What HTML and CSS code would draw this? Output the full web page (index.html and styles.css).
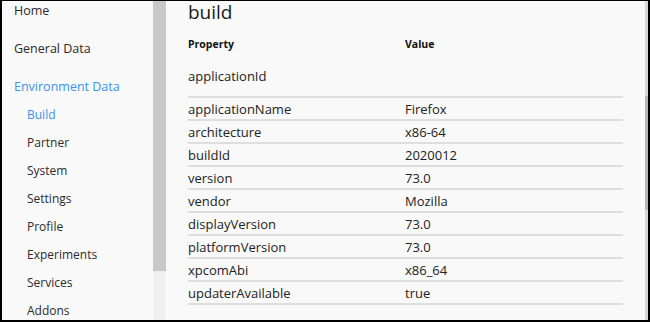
FILE: index.html
```html
<!DOCTYPE html>
<html lang="en">
<head>
  <meta charset="UTF-8" />
  <title>about:telemetry - build</title>
  <link rel="stylesheet" href="styles.css">
</head>
<body>
  <div class="frame">
    <nav class="sidebar">
      <ul class="nav">
        <li class="nav-item">Home</li>
        <li class="nav-item">General Data</li>
        <li class="nav-item active">Environment Data</li>
        <li class="nav-sub active">Build</li>
        <li class="nav-sub">Partner</li>
        <li class="nav-sub">System</li>
        <li class="nav-sub">Settings</li>
        <li class="nav-sub">Profile</li>
        <li class="nav-sub">Experiments</li>
        <li class="nav-sub">Services</li>
        <li class="nav-sub">Addons</li>
      </ul>
    </nav>

    <div class="side-scroll">
      <div class="side-thumb"></div>
      <div class="side-track"></div>
    </div>

    <main class="content">
      <h2>build</h2>

      <div class="table">
        <div class="row head">
          <div>Property</div>
          <div>Value</div>
        </div>
        <div class="row first">
          <div>applicationId</div>
          <div></div>
        </div>
        <div class="row line"><div>applicationName</div><div>Firefox</div></div>
        <div class="row line"><div>architecture</div><div>x86-64</div></div>
        <div class="row line"><div>buildId</div><div>2020012</div></div>
        <div class="row line"><div>version</div><div>73.0</div></div>
        <div class="row line"><div>vendor</div><div>Mozilla</div></div>
        <div class="row line"><div>displayVersion</div><div>73.0</div></div>
        <div class="row line"><div>platformVersion</div><div>73.0</div></div>
        <div class="row line"><div>xpcomAbi</div><div>x86_64</div></div>
        <div class="row line last"><div>updaterAvailable</div><div>true</div></div>
      </div>
    </main>

    <div class="page-scroll">
      <div class="page-track top"></div>
      <div class="page-thumb"></div>
      <div class="page-track"></div>
    </div>
  </div>
</body>
</html>
```

FILE: styles.css
```css
* {
  box-sizing: border-box;
}

html, body {
  margin: 0;
  padding: 0;
  height: 100%;
  overflow: hidden;
}

body {
  font-family: 'Open Sans', 'Noto Sans', sans-serif;
  font-size: 13px;
  color: #222;
  background: #f9f9f9;
}

.frame {
  display: flex;
  height: 322px;
  border: 2px solid #000;
  border-top-width: 1px;
  overflow: hidden;
}

/* left navigation */
.sidebar {
  width: 151px;
  overflow: hidden;
  font-size: 12px;
}

.nav {
  list-style: none;
  margin: -9px 0 0 0;
  padding: 0;
}

.nav-item {
  height: 37.5px;
  line-height: 37.5px;
  padding-left: 12px;
  color: #2b2b2b;
}

.nav-sub {
  height: 28px;
  line-height: 28px;
  padding-left: 25px;
  color: #2b2b2b;
}

.nav .active {
  color: #3a93ec;
}

.nav-item.active {
  height: 28px;
  line-height: 28px;
  margin-top: 6px;
  font-size: 12.5px;
}

.nav-item:first-child,
.nav-item:nth-child(2) {
  font-size: 12.5px;
}

/* sidebar scrollbar */
.side-scroll {
  width: 13px;
  display: flex;
  flex-direction: column;
  flex-shrink: 0;
}

.side-thumb {
  height: 270px;
  background: #c8c8c8;
}

.side-track {
  flex: 1;
  background: #efefef;
  border-left: 1px solid #f6f6f6;
  border-right: 1px solid #f6f6f6;
}

/* main area */
.content {
  flex: 1;
  padding-left: 22px;
}

h2 {
  margin: -1px 0 0 0;
  font-size: 19px;
  font-weight: 400;
  line-height: 24px;
  color: #1b1b1b;
}

.table {
  width: 435px;
  margin-top: 8px;
}

.row {
  display: grid;
  grid-template-columns: 217px 1fr;
  align-items: center;
  height: 23px;
}

.row.head {
  font-size: 10.5px;
  font-weight: 700;
  color: #111;
}

.row.first {
  height: 41px;
}

.row.line {
  border-top: 2px solid #dedede;
}

.row.last {
  border-bottom: 2px solid #dedede;
  height: 25px;
}

/* page scrollbar */
.page-scroll {
  width: 3px;
  display: flex;
  flex-direction: column;
  flex-shrink: 0;
}

.page-track {
  flex: 1;
  background: #d6d6d6;
}

.page-track.top {
  flex: none;
  height: 95px;
}

.page-thumb {
  height: 114px;
  background: #b4b4b4;
}
```
